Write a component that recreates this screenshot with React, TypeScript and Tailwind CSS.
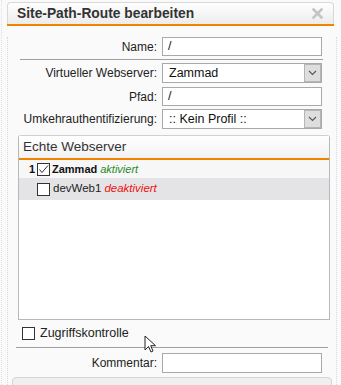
import React from "react";

const Chevron = () => (
  <svg width="9" height="6" viewBox="0 0 9 6" className="block">
    <path d="M1 1 L4.5 4.5 L8 1" fill="none" stroke="#555" strokeWidth="1.1" />
  </svg>
);

const Select = ({ value }: { value: string }) => (
  <div className="w-[160px] h-[20px] border border-[#a9a9a9] bg-white flex items-center">
    <div className="flex-1 pl-[6px] text-[12.5px] text-[#111] leading-none">{value}</div>
    <div className="w-[17px] h-[18px] bg-[#dedede] border border-[#b5b5b5] flex items-center justify-center">
      <Chevron />
    </div>
  </div>
);

const Input = ({ value, h = 19 }: { value: string; h?: number }) => (
  <div
    className="w-[160px] border border-[#a9a9a9] bg-white flex items-center pl-[5px] text-[12.5px] text-[#111] leading-none"
    style={{ height: h }}
  >
    {value}
  </div>
);

const Label = ({ children }: { children: React.ReactNode }) => (
  <div className="w-[154px] text-right pr-[5px] text-[12px] text-[#222] leading-none">{children}</div>
);

const Check = ({ checked }: { checked?: boolean }) => (
  <div className="w-[13px] h-[13px] border border-[#333] bg-white relative shrink-0">
    {checked && (
      <svg width="13" height="13" viewBox="0 0 13 13" className="absolute -left-[1px] -top-[1px]">
        <path d="M2.5 6.5 L5 9.5 L11 2.5" fill="none" stroke="#333" strokeWidth="1" />
      </svg>
    )}
  </div>
);

export default function App() {
  return (
    <div
      className="w-[341px] h-[385px] bg-[#fafafa] relative overflow-hidden"
      style={{ fontFamily: '"Liberation Sans", Arial, sans-serif' }}
    >
      <div className="absolute left-[1px] top-0 h-full border-l border-dotted border-[#e0e0e0]" />
      <div className="ml-[7px] w-[330px] pt-[2px]">
        {/* title bar */}
        <div className="w-[327px] h-[22px] rounded-t-[4px] border border-b-0 border-[#d8d8d8] bg-gradient-to-b from-[#ffffff] to-[#ececec] flex items-center pl-[9px] pr-[10px]">
          <div className="flex-1 text-[13.8px] font-bold text-[#333] leading-none">Site-Path-Route bearbeiten</div>
          <svg width="11" height="11" viewBox="0 0 11 11">
            <path d="M1.5 1.5 L9.5 9.5 M9.5 1.5 L1.5 9.5" stroke="#c4c4c4" strokeWidth="2.6" strokeLinecap="square" />
          </svg>
        </div>
        <div className="w-[327px] h-[2px] bg-[#f08300]" />
        {/* body */}
        <div className="border-l border-r border-dotted border-[#d8d8d8] h-[360px]">
          <div className="flex items-center mt-[11px]">
            <Label>Name:</Label>
            <Input value="/" />
          </div>
          <div className="ml-[12px] w-[303px] h-px bg-[#a0a0a0] mt-[3px]" />
          <div className="flex items-center mt-[3px]">
            <Label>Virtueller Webserver:</Label>
            <Select value="Zammad" />
          </div>
          <div className="flex items-center mt-[4px]">
            <Label>Pfad:</Label>
            <Input value="/" />
          </div>
          <div className="flex items-center mt-[3px]">
            <Label>Umkehrauthentifizierung:</Label>
            <Select value=":: Kein Profil ::" />
          </div>
          {/* panel */}
          <div className="ml-[10px] w-[312px] h-[185px] mt-[6px] border border-[#b8b8b8] border-t-[#d0d0d0] rounded-t-[3px] bg-white flex flex-col">
            <div className="h-[22px] bg-gradient-to-b from-[#ffffff] to-[#f2f2f2] flex items-center pl-[4px] text-[13.5px] text-[#333] leading-none">
              Echte Webserver
            </div>
            <div className="h-[2px] bg-[#f08300]" />
            <div className="h-[18px] bg-[#f7f7f7] flex items-center pl-[10px] text-[11px] leading-none">
              <span className="font-bold text-[#111] w-[8px]">1</span>
              <Check checked />
              <span className="font-bold text-[#111] ml-[2px]">Zammad</span>
              <span className="italic text-[#1f8a1f] ml-[3px]">aktiviert</span>
            </div>
            <div className="h-[22px] bg-[#e4e4e6] flex items-center pl-[18px] text-[11.5px] leading-none">
              <Check />
              <span className="text-[#222] ml-[3px]">devWeb1</span>
              <span className="italic text-[#ee1111] ml-[3px]">deaktiviert</span>
            </div>
          </div>
          <div className="flex items-center ml-[14px] mt-[6px] h-[14px]">
            <Check />
            <span className="text-[12.5px] text-[#222] ml-[5px] leading-none">Zugriffskontrolle</span>
          </div>
          <div className="ml-[8px] w-[312px] h-px bg-[#a0a0a0] mt-[7px]" />
          <div className="flex items-center mt-[5px]">
            <Label>Kommentar:</Label>
            <Input value="" h={20} />
          </div>
          <div className="ml-[4px] w-[320px] h-[20px] mt-[4px] rounded-t-[4px] border border-[#d4d4d4] bg-[#efefef]" />
        </div>
      </div>
      {/* mouse cursor */}
      <svg className="absolute left-[144px] top-[335px]" width="14" height="20" viewBox="0 0 14 20">
        <path d="M1 1 L1 15 L4.5 11.5 L7 17 L9 16 L6.7 10.7 L11.5 10.7 Z" fill="#fff" stroke="#222" strokeWidth="1" strokeLinejoin="round" />
      </svg>
    </div>
  );
}
